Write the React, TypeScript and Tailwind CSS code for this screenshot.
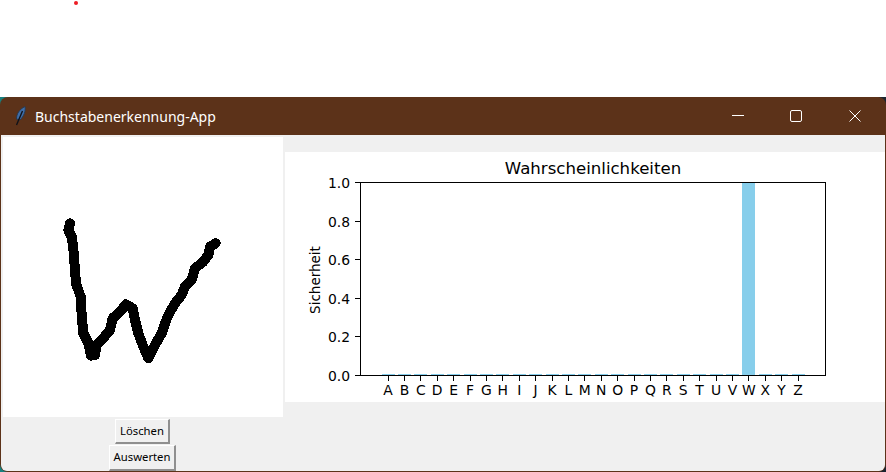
import React from 'react';

const letters = 'ABCDEFGHIJKLMNOPQRSTUVWXYZ'.split('');
const yTicks = ['0.0', '0.2', '0.4', '0.6', '0.8', '1.0'];

// hand drawn W, traced at 3x
const strokePoints =
  '90,55 85,75 95,95 100,130 105,195 108,235 122,275 125,330 130,385 145,415 153,452 165,450 170,420 185,405 210,375 218,340 240,320 258,298 278,310 285,345 295,385 310,425 325,460 345,420 365,385 375,355 385,330 405,295 425,270 435,245 455,225 465,190 490,170 505,150 510,125 527,115';

function Chart() {
  const left = 75;
  const top = 30;
  const right = 540;
  const bottom = 223;
  const step = 16.4;
  const x0 = 103;
  return (
    <svg width="601" height="250" viewBox="0 0 601 250" className="block" fontFamily="'DejaVu Sans', sans-serif" fill="#000">
      <text x="308" y="22" fontSize="16.6" textAnchor="middle">Wahrscheinlichkeiten</text>
      {letters.map((l, i) => {
        const x = x0 + i * step;
        const tx = Math.floor(x) + 0.5;
        const barX = Math.round(x - 6.5);
        return (
          <g key={l}>
            <rect x={barX} y={l === 'W' ? top : bottom - 1} width="13" height={l === 'W' ? bottom - top : 1} fill="#87ceeb" />
            <line x1={tx} x2={tx} y1={bottom} y2={bottom + 6} stroke="#000" />
            <text x={x} y={bottom + 20} fontSize="13.9" textAnchor="middle">{l}</text>
          </g>
        );
      })}
      {yTicks.map((t, i) => {
        const y = Math.round(bottom - i * 38.6) + 0.5;
        return (
          <g key={t}>
            <line x1={left - 5} x2={left} y1={y} y2={y} stroke="#000" />
            <text x={left - 10} y={y + 5} fontSize="13.9" textAnchor="end">{t}</text>
          </g>
        );
      })}
      <rect x={left + 0.5} y={top + 0.5} width={right - left} height={bottom - top} fill="none" stroke="#000" />
      <text x="0" y="0" fontSize="13.5" textAnchor="middle" transform="translate(35 128) rotate(-90)">Sicherheit</text>
    </svg>
  );
}

function Feather() {
  return (
    <svg width="12" height="20" viewBox="0 0 12 20">
      <path d="M11 0.5 C12 5 10 10 6 14 L2.5 13 C2.5 8 5 3.5 11 0.5Z" fill="#3f6ea8" stroke="#2a3a50" strokeWidth="1" />
      <path d="M8.5 5 L2.5 19" stroke="#10131a" strokeWidth="1.4" />
    </svg>
  );
}

function TkButton({ label, className }: { label: string; className: string }) {
  return (
    <button className={`flex items-center justify-center bg-[#f0f0f0] border-t border-l border-r-2 border-b-2 border-t-white border-l-white border-r-[#8f8f8f] border-b-[#8f8f8f] text-[11.3px] text-black ${className}`}>
      {label}
    </button>
  );
}

export default function App() {
  return (
    <div className="w-[886px] h-[472px] bg-white overflow-hidden font-['Noto_Sans',sans-serif]">
      {/* stray red dot above the window */}
      <div className="h-[97px] pt-px pl-[74px]">
        <div className="w-1 h-1 rounded-full bg-[#ed1c24]"></div>
      </div>

      {/* desktop peeking through the window corners */}
      <div className="h-[375px] bg-linear-to-r from-[#17807f] from-[1%] to-[#1a2430] to-[2%]">
        <div className="h-full flex flex-col bg-[#5c3219] rounded-lg overflow-hidden">
          <div className="h-[38px] shrink-0 flex items-center text-white">
            <div className="w-[35px] flex justify-center pl-[5px]">
              <Feather />
            </div>
            <span className="text-[14px] flex-1">Buchstabenerkennung-App</span>
            <div className="flex items-center pr-px">
              <div className="w-[58px] flex justify-center">
                <svg width="12" height="12" viewBox="0 0 12 12"><line x1="0" x2="12" y1="5.5" y2="5.5" stroke="#fff" /></svg>
              </div>
              <div className="w-[58px] flex justify-center">
                <svg width="12" height="12" viewBox="0 0 12 12"><rect x="0.5" y="0.5" width="11" height="11" rx="1.5" fill="none" stroke="#fff" /></svg>
              </div>
              <div className="w-[60px] flex justify-center">
                <svg width="12" height="12" viewBox="0 0 12 12"><path d="M0.5 0.5L11.5 11.5M11.5 0.5L0.5 11.5" stroke="#fff" /></svg>
              </div>
            </div>
          </div>

          <div className="flex-1 flex ml-px mr-px mb-px bg-[#f0f0f0] min-h-0 rounded-b-md overflow-hidden">
            <div className="w-[282px] pl-[2px] pt-[2px] flex flex-col items-center shrink-0">
              <div className="w-[280px] h-[280px] bg-white shrink-0">
                <svg width="280" height="280" viewBox="0 0 280 280" shapeRendering="crispEdges">
                  <g transform="translate(37 68) scale(0.3333)">
                    <polyline points={strokePoints} fill="none" stroke="#000" strokeWidth="30" strokeLinecap="round" strokeLinejoin="round" />
                  </g>
                </svg>
              </div>
              <TkButton label="Löschen" className="w-[55px] h-[25px] mt-[2px] mr-px pt-px shrink-0" />
              <TkButton label="Auswerten" className="w-[67px] h-[26px] mt-px mr-px shrink-0" />
            </div>
            <div className="pl-[2px] pt-[17px]">
              <div className="bg-white w-[601px] h-[250px]">
                <Chart />
              </div>
            </div>
          </div>
        </div>
      </div>
    </div>
  );
}
